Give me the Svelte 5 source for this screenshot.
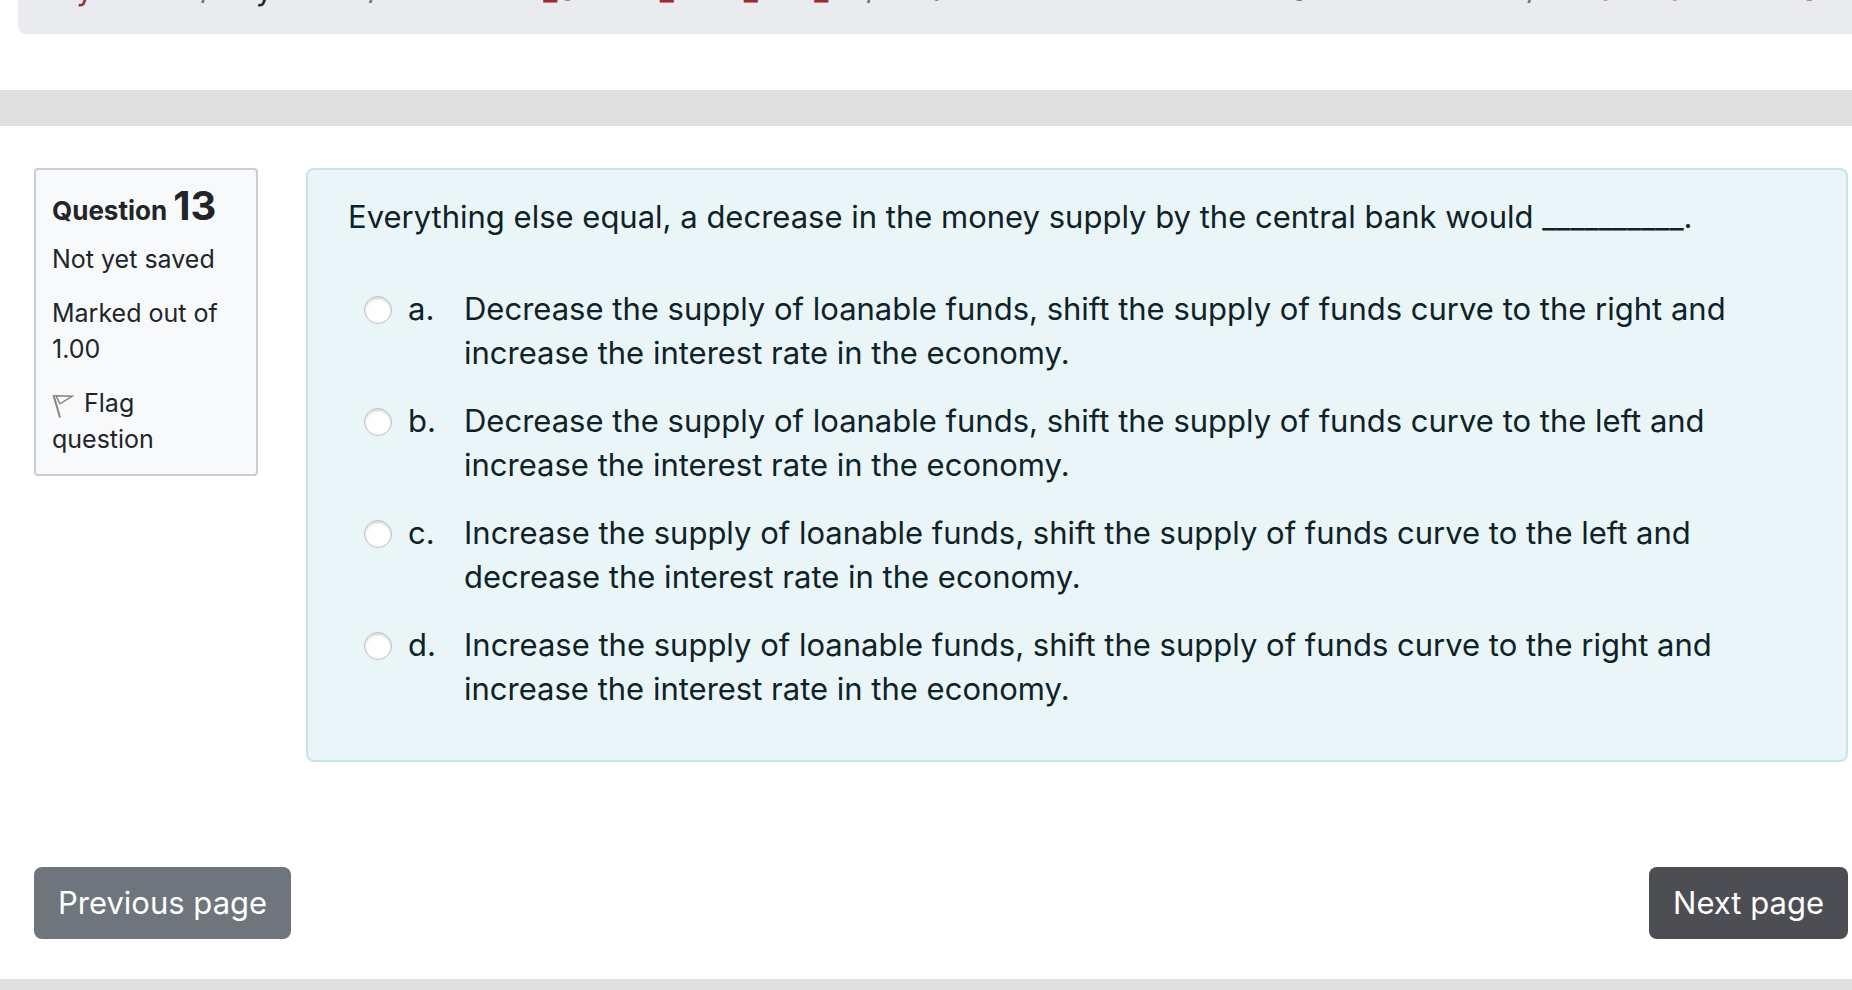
<script lang="ts">
    type Crumb = { text: string, link?: boolean }
    type Answer = { key: string, text: string }

    const crumbs: Crumb[] = [
        { text: 'My home', link: true },
        { text: 'My units' },
        { text: 'AFIN2053_SHFYR_2021_ALL_U', link: true },
        { text: 'Exam Period Assessments Session 2 2021' },
        { text: 'Final Exam 2021 S2', link: true },
    ]

    const answers: Answer[] = [
        { key: 'a', text: 'Decrease the supply of loanable funds, shift the supply of funds curve to the right and increase the interest rate in the economy.' },
        { key: 'b', text: 'Decrease the supply of loanable funds, shift the supply of funds curve to the left and increase the interest rate in the economy.' },
        { key: 'c', text: 'Increase the supply of loanable funds, shift the supply of funds curve to the left and decrease the interest rate in the economy.' },
        { key: 'd', text: 'Increase the supply of loanable funds, shift the supply of funds curve to the right and increase the interest rate in the economy.' },
    ]

    let selected = $state('')
</script>

<div class="page">
    <nav aria-label="Breadcrumb">
        <ol>
            {#each crumbs as crumb}
                <li>
                    {#if crumb.link}
                        <a href="#top">{crumb.text}</a>
                    {:else}
                        <span>{crumb.text}</span>
                    {/if}
                </li>
            {/each}
        </ol>
    </nav>

    <main>
        <div class="question">
            <aside>
                <h3>Question <span>13</span></h3>
                <p>Not yet saved</p>
                <p>Marked out of 1.00</p>
                <a class="flag" href="#flag">
                    <svg width="22" height="24" viewBox="0 0 22 24" aria-hidden="true">
                        <path fill="none" stroke="#858585" stroke-width="2" d="M1.5 1L8 23.5"></path>
                        <path fill="#fff" stroke="#858585" stroke-width="1.5" d="M4 1.8L20 2.3L8 9.8Z"></path>
                    </svg>
                    Flag question
                </a>
            </aside>

            <section>
                <p id="stem">Everything else equal, a decrease in the money supply by the central bank would __________.</p>
                <div class="answers" role="radiogroup" aria-labelledby="stem">
                    {#each answers as answer}
                        <label>
                            <input type="radio" name="answer" value={answer.key} bind:group={selected} />
                            <span>{answer.key}.</span>
                            <span>{answer.text}</span>
                        </label>
                    {/each}
                </div>
            </section>
        </div>

        <div class="buttons">
            <button type="button" class="previous">Previous page</button>
            <button type="button" class="next">Next page</button>
        </div>
    </main>
</div>

<style>
    :global(body) {
        background: #e0e0e0;
        overflow: hidden;
    }
    .page {
        font-family: Inter, "Liberation Sans", sans-serif;
        font-size: 31px;
        line-height: 44px;
        color: #212529;
    }
    h3, p, ol {
        margin: 0;
        padding: 0;
        font-weight: 400;
    }
    nav {
        background: #fff;
        padding: 0 0 56px 18px;
        margin-bottom: 36px;
        overflow: hidden;
    }
    /* the trail is scrolled half out of view */
    ol {
        display: flex;
        list-style: none;
        white-space: nowrap;
        background: #e9ebef;
        border-radius: 0 0 0 8px;
        margin-top: -33px;
        padding: 0 0 23px 30px;
    }
    li:not(:first-child)::before {
        content: "/";
        color: #6c757d;
        padding: 0 16px;
    }
    li a {
        color: #9e2a35;
        text-decoration: none;
    }
    main {
        background: #fff;
        padding: 42px 4px 40px 34px;
    }
    .question {
        display: flex;
        align-items: flex-start;
        gap: 48px;
    }
    aside {
        box-sizing: border-box;
        flex: 0 0 224px;
        display: flex;
        flex-direction: column;
        gap: 18px;
        padding: 16px 16px 17px;
        font-size: 25px;
        line-height: 36px;
        background: #f8f9fb;
        border: 2px solid #cacdd7;
        border-radius: 4px;
    }
    h3 {
        font-size: 26px;
        line-height: 40px;
        font-weight: 700;
        margin-bottom: -8px;
    }
    h3 span {
        font-size: 40px;
    }
    .flag {
        color: inherit;
        text-decoration: none;
    }
    .flag svg {
        vertical-align: -6px;
        margin-right: 3px;
    }
    section {
        flex: 1;
        box-sizing: border-box;
        padding: 25px 40px 49px;
        color: #0f2228;
        background: #eaf5f8;
        border: 2px solid #c4e4ea;
        border-radius: 8px;
    }
    .answers {
        display: flex;
        flex-direction: column;
        gap: 24px;
        padding: 48px 48px 0 16px;
    }
    label {
        display: grid;
        grid-template-columns: 28px 40px 1fr;
        column-gap: 16px;
        align-items: start;
    }
    input {
        appearance: none;
        width: 28px;
        height: 28px;
        margin: 9px 0 0;
        background: #fff;
        border: 1px solid #bcbfc0;
        border-radius: 50%;
        box-shadow: inset 0 2px 3px #d8d8d8;
    }
    input:checked {
        border: 9px solid #0f6cbf;
    }
    .buttons {
        display: flex;
        justify-content: space-between;
        margin-top: 105px;
    }
    button {
        font: inherit;
        color: #fff;
        padding: 14px 24px;
        border: none;
        border-radius: 8px;
        cursor: pointer;
    }
    .previous {
        background: #6e757d;
    }
    .next {
        background: #4d4e53;
    }
</style>
